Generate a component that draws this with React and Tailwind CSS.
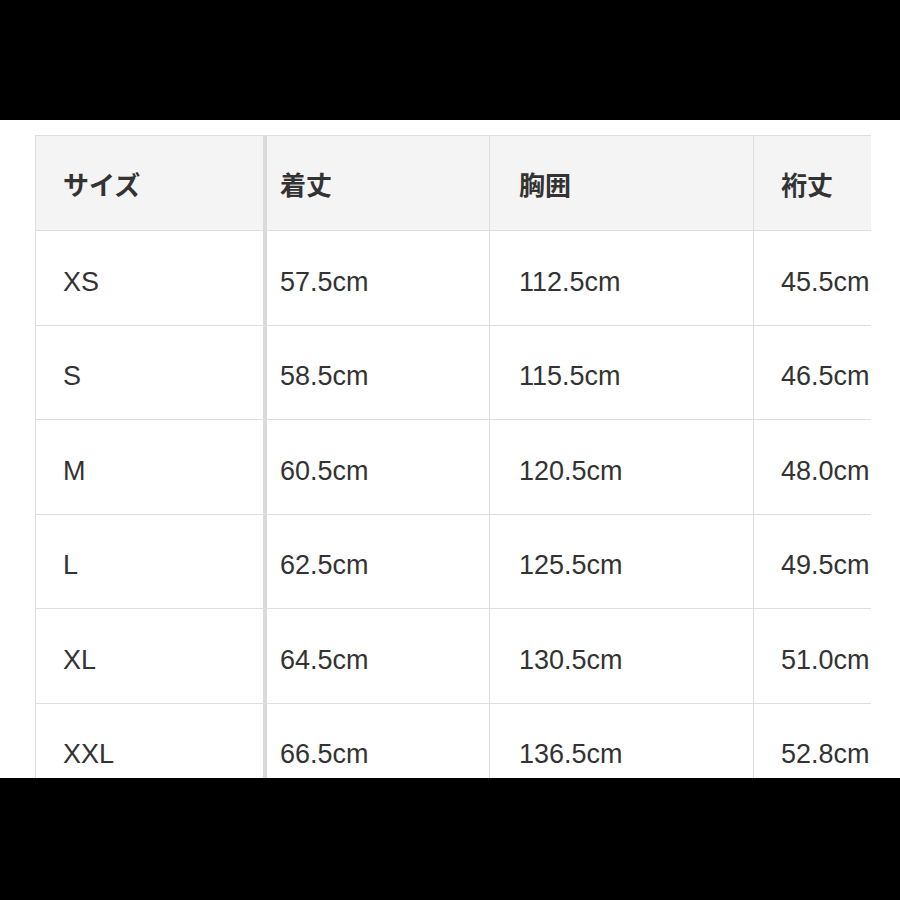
const headers = ["サイズ", "着丈", "胸囲", "裄丈"];

const rows = [
  ["XS", "57.5cm", "112.5cm", "45.5cm"],
  ["S", "58.5cm", "115.5cm", "46.5cm"],
  ["M", "60.5cm", "120.5cm", "48.0cm"],
  ["L", "62.5cm", "125.5cm", "49.5cm"],
  ["XL", "64.5cm", "130.5cm", "51.0cm"],
  ["XXL", "66.5cm", "136.5cm", "52.8cm"],
];

const cellClasses = [
  "pl-[27px] border-r-4 border-[#dadada]",
  "pl-[13px] border-r border-[#dedede]",
  "pl-[29px] border-r border-[#dedede]",
  "pl-[27px]",
];

function Row({ cells, header }) {
  return (
    <div
      className={`grid grid-cols-[231px_223px_264px_117px] border-b border-[#dedede] ${
        header ? "h-[95px] bg-[#f4f4f4] font-bold text-[26px]" : "h-[94.5px] bg-white text-[27px]"
      }`}
    >
      {cells.map((c, i) => (
        <div
          key={i}
          className={`flex items-center whitespace-nowrap overflow-hidden ${header ? "pt-[6px]" : "pt-[8px]"} ${cellClasses[i]}`}
        >
          {c}
        </div>
      ))}
    </div>
  );
}

export default function App() {
  return (
    <div className="w-[900px] h-[900px] bg-black flex flex-col">
      <div className="h-[120px] shrink-0" />
      <div
        className="h-[658px] bg-white overflow-hidden pt-[15px] text-[#333]"
        style={{ fontFamily: '"Liberation Sans", "Noto Sans CJK JP", sans-serif' }}
      >
        <div className="ml-[35px] w-[836px] border-l border-t border-[#dedede]">
          <Row cells={headers} header />
          {rows.map((r) => (
            <Row key={r[0]} cells={r} />
          ))}
        </div>
      </div>
    </div>
  );
}
